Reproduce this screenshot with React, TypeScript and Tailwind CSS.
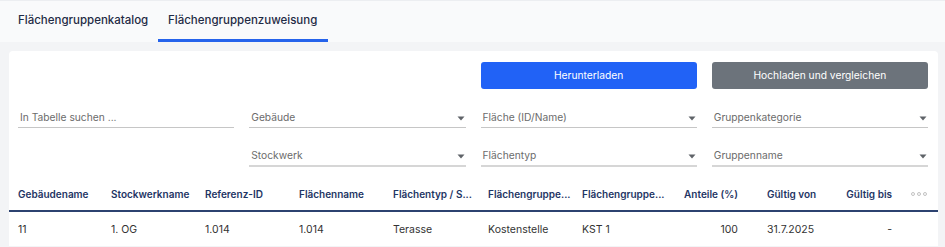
import React from 'react';

const FILTERS_ROW_ONE = ['Gebäude', 'Fläche (ID/Name)', 'Gruppenkategorie'];
const FILTERS_ROW_TWO = ['Stockwerk', 'Flächentyp', 'Gruppenname'];

type Column = { label: string; cls: string; value: string };

const COLUMNS: Column[] = [
  { label: 'Gebäudename', cls: 'w-[93px] pl-[9px]', value: '11' },
  { label: 'Stockwerkname', cls: 'w-[94px] pl-[9px]', value: '1. OG' },
  { label: 'Referenz-ID', cls: 'w-[94px] pl-[9px]', value: '1.014' },
  { label: 'Flächenname', cls: 'w-[94px] pl-[9px]', value: '1.014' },
  { label: 'Flächentyp / S...', cls: 'w-[95px] pl-[9px]', value: 'Terasse' },
  { label: 'Flächengruppe...', cls: 'w-[94px] pl-[9px]', value: 'Kostenstelle' },
  { label: 'Flächengruppe...', cls: 'w-[94px] pl-[9px]', value: 'KST 1' },
  { label: 'Anteile (%)', cls: 'w-[80px] pr-[9px] text-right', value: '100' },
  { label: 'Gültig von', cls: 'w-[83px] pl-[20px]', value: '31.7.2025' },
  { label: 'Gültig bis', cls: 'w-[71px] pr-[9px] text-right', value: '-' },
];

function Caret() {
  return (
    <svg width="8" height="5" viewBox="0 0 8 5" className="shrink-0">
      <path d="M0.5 0.5h7L4 4.5z" fill="#5f6368" />
    </svg>
  );
}

function SelectField({ label, thick }: { label: string; thick?: boolean }) {
  return (
    <div
      className={
        thick
          ? 'flex h-[23px] items-center justify-between border-b-2 border-[#d6d6d6] pl-[2px] pr-[1px] pt-[3px]'
          : 'flex h-[22px] items-center justify-between border-b border-[#c6c6c6] pl-[2px] pr-[1px] pt-[3px]'
      }
    >
      <span className="text-[10.25px] text-[#6b6b6b]">{label}</span>
      <Caret />
    </div>
  );
}

export default function App() {
  return (
    <div className="h-[247px] w-[945px] overflow-hidden bg-[#f3f4f6] font-['Inter',sans-serif]">
      {/* Tabs */}
      <div className="flex h-[42px] border-t border-[#eceef1] bg-[#f9fafb]">
        <div className="ml-[8px] flex w-[150px] items-center px-[10px] pb-[1px] text-[11.5px] font-medium text-[#1f2b45]">
          Flächengruppenkatalog
        </div>
        <div className="flex w-[170px] items-center border-b-[3px] border-[#2563eb] px-[10px] pt-[2px] text-[11.5px] font-medium text-[#1f2b45]">
          Flächengruppenzuweisung
        </div>
      </div>

      <div className="pt-[9px]">
        <div className="ml-[9px] w-[929px] rounded-t-[4px] bg-white pt-[11px]">
          <div className="grid grid-cols-4 gap-x-[15px] pl-[9px] pr-[10px]">
            <div />
            <div />
            <button
              type="button"
              className="h-[27px] rounded-[3px] bg-[#2162f6] text-[10.25px] text-white"
            >
              Herunterladen
            </button>
            <button
              type="button"
              className="h-[27px] rounded-[3px] bg-[#6c737b] text-[10.25px] text-white"
            >
              Hochladen und vergleichen
            </button>

            <div className="mt-[17px] flex h-[22px] items-center border-b border-[#c6c6c6] pl-[2px] pt-[3px]">
              <span className="text-[10.25px] text-[#6b6b6b]">In Tabelle suchen ...</span>
            </div>
            {FILTERS_ROW_ONE.map((label) => (
              <div key={label} className="mt-[17px]">
                <SelectField label={label} />
              </div>
            ))}

            <div />
            {FILTERS_ROW_TWO.map((label) => (
              <div key={label} className="mt-[16px]">
                <SelectField label={label} thick />
              </div>
            ))}
          </div>

          {/* Table */}
          <div className="mt-[10px]">
            <div className="flex h-[35px] items-center border-b-2 border-[#2c4270] pt-[1px] text-[10px] font-semibold text-[#1e3564]">
              {COLUMNS.map((col, i) => (
                <div key={i} className={`${col.cls} whitespace-nowrap`}>
                  {col.label}
                </div>
              ))}
              <div className="flex w-[37px] gap-[2px] pl-[10px]">
                <span className="h-[4px] w-[4px] rounded-full border border-[#c2c2c2]" />
                <span className="h-[4px] w-[4px] rounded-full border border-[#c2c2c2]" />
                <span className="h-[4px] w-[4px] rounded-full border border-[#c2c2c2]" />
              </div>
            </div>
            <div className="flex h-[34px] items-center pt-[1px] text-[10.5px] text-[#333333]">
              {COLUMNS.map((col, i) => (
                <div key={i} className={`${col.cls} whitespace-nowrap`}>
                  {col.value}
                </div>
              ))}
            </div>
          </div>
        </div>
      </div>
    </div>
  );
}
